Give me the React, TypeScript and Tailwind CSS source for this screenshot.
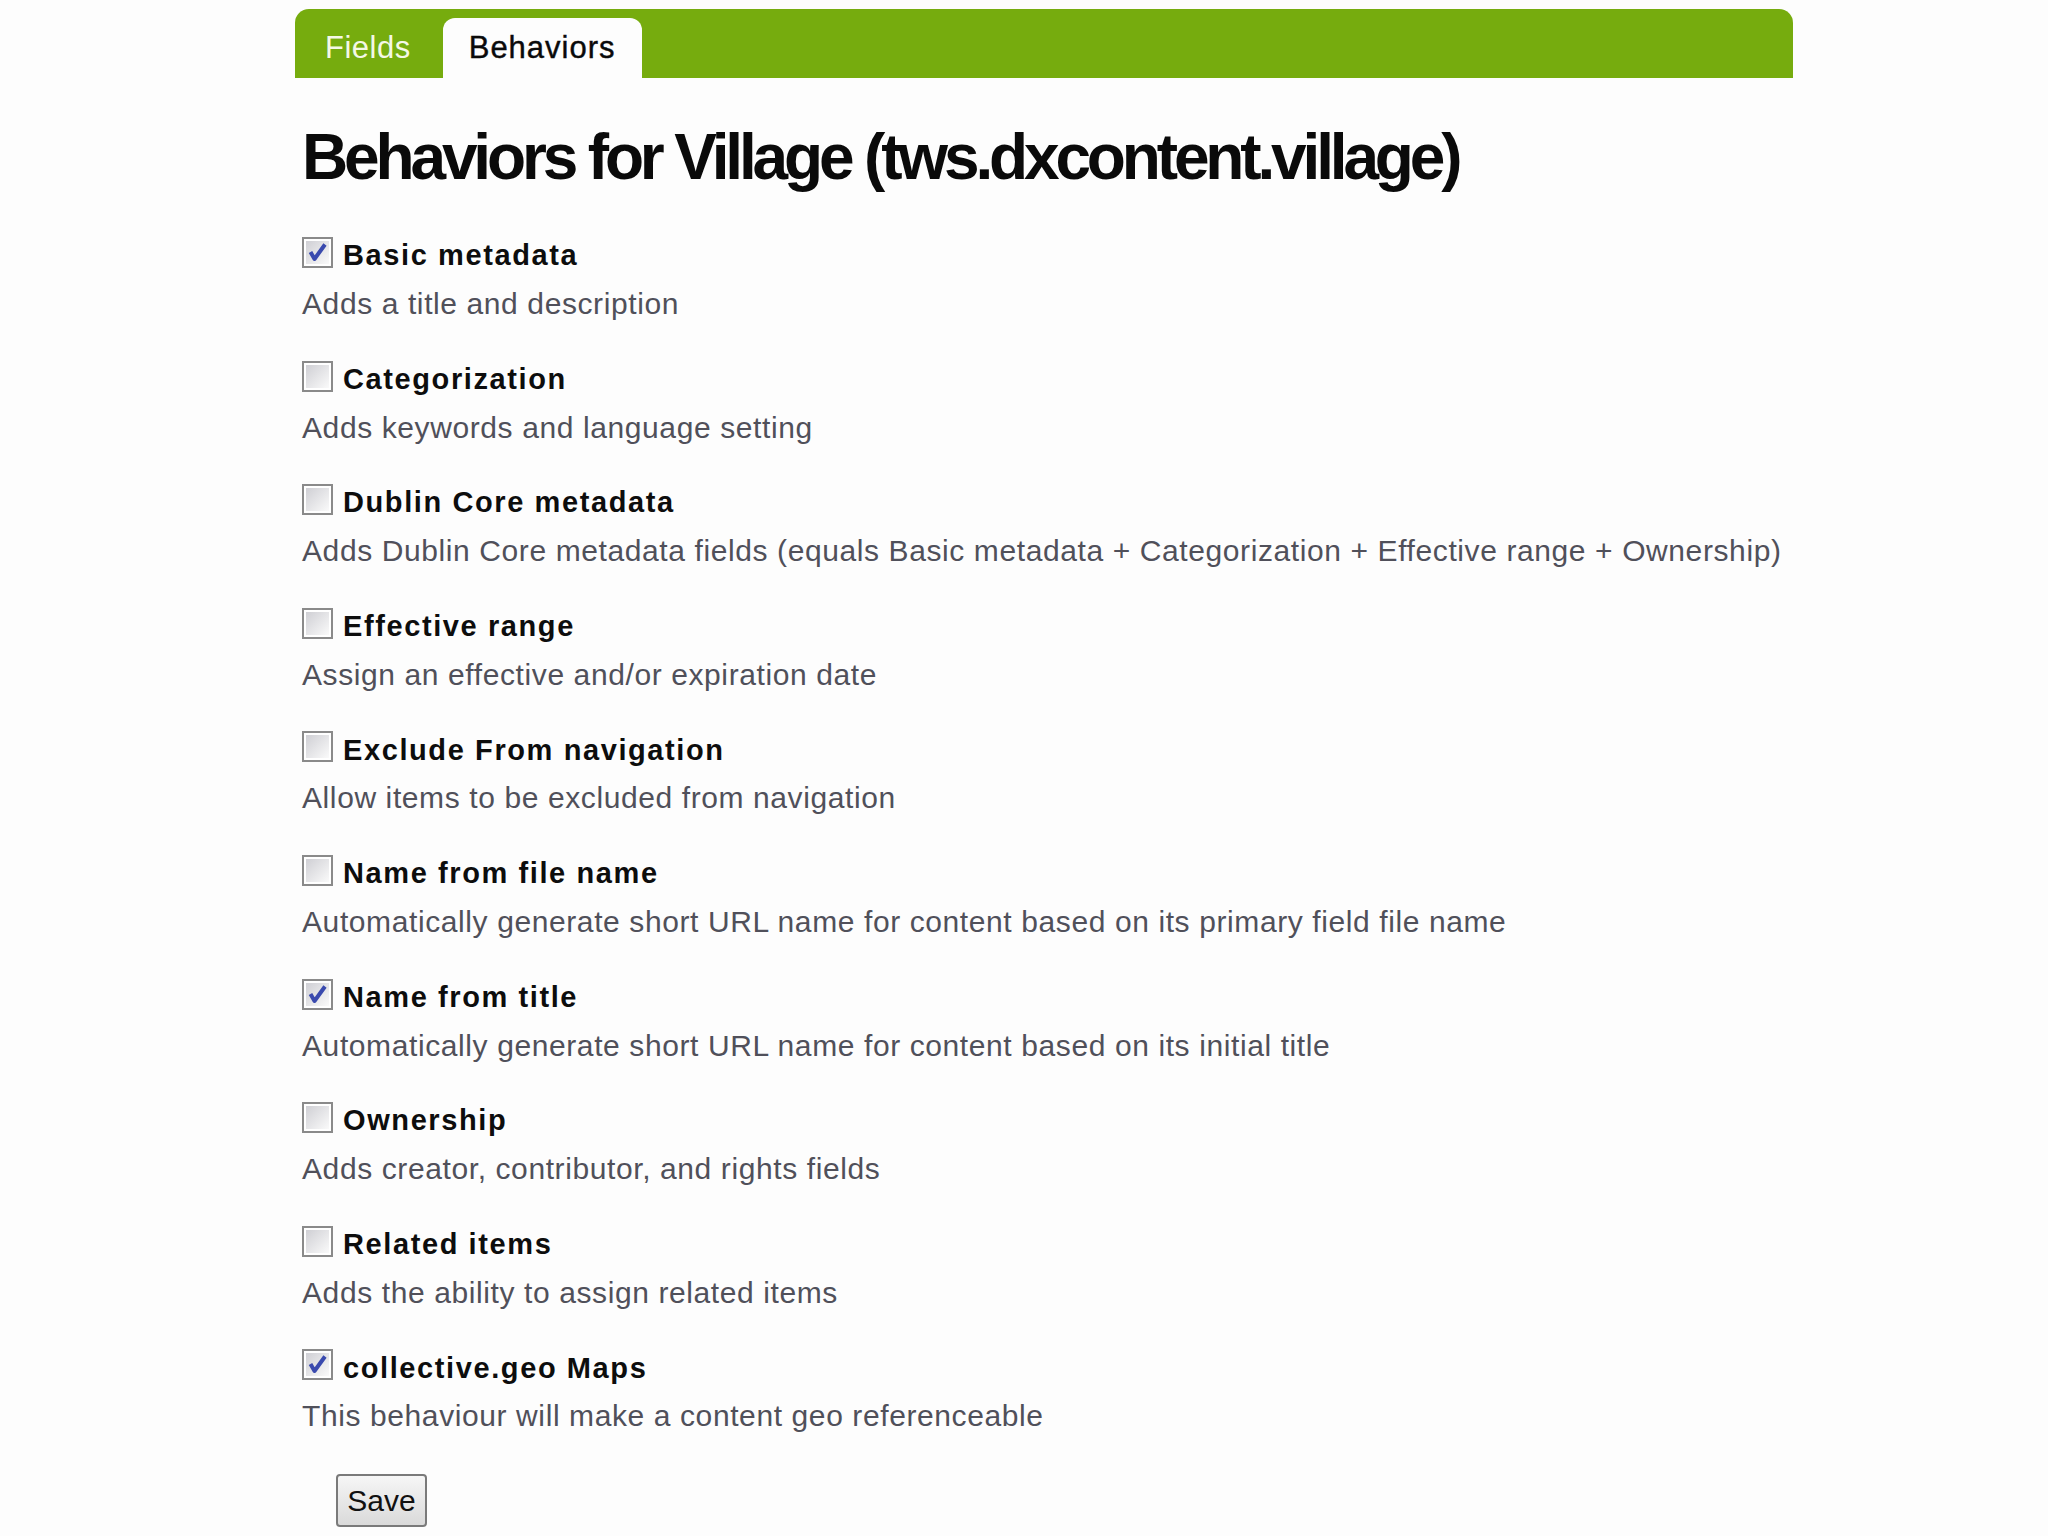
import React from "react";

type Behavior = {
  title: string;
  description: string;
  checked: boolean;
};

const behaviors: Behavior[] = [
  { title: "Basic metadata", description: "Adds a title and description", checked: true },
  { title: "Categorization", description: "Adds keywords and language setting", checked: false },
  {
    title: "Dublin Core metadata",
    description:
      "Adds Dublin Core metadata fields (equals Basic metadata + Categorization + Effective range + Ownership)",
    checked: false,
  },
  { title: "Effective range", description: "Assign an effective and/or expiration date", checked: false },
  { title: "Exclude From navigation", description: "Allow items to be excluded from navigation", checked: false },
  {
    title: "Name from file name",
    description: "Automatically generate short URL name for content based on its primary field file name",
    checked: false,
  },
  {
    title: "Name from title",
    description: "Automatically generate short URL name for content based on its initial title",
    checked: true,
  },
  { title: "Ownership", description: "Adds creator, contributor, and rights fields", checked: false },
  { title: "Related items", description: "Adds the ability to assign related items", checked: false },
  { title: "collective.geo Maps", description: "This behaviour will make a content geo referenceable", checked: true },
];

function CheckBox({ checked }: { checked: boolean }) {
  return (
    <svg width="31" height="31" viewBox="0 0 31 31" className="shrink-0 mb-[7px]">
      <defs>
        <linearGradient id="cb-fill" x1="0" y1="0" x2="1" y2="1">
          <stop offset="0" stopColor="#cfcfd4" />
          <stop offset="1" stopColor="#fafafa" />
        </linearGradient>
      </defs>
      <rect x="1" y="1" width="29" height="29" fill="#ffffff" stroke="#8a8a8a" strokeWidth="2" />
      <rect x="4" y="4" width="23" height="23" fill="url(#cb-fill)" />
      {checked && (
        <path
          d="M8.5 15 L12.5 22 L23 7.5"
          stroke="#3a4aae"
          strokeWidth="4"
          strokeLinejoin="round"
          fill="none"
        />
      )}
    </svg>
  );
}

export default function App() {
  return (
    <div className="min-h-screen bg-[#fdfdfd] pt-[9px] font-['Liberation_Sans',Arial,sans-serif]">
      <div className="ml-[295px] w-[1498px]">
        {/* tab bar */}
        <div className="flex h-[69px] items-end rounded-t-[14px] bg-[#76ac0e]">
          <div className="flex h-[60px] items-center pl-[30px] pr-[32px] text-[31px] tracking-[0.5px] text-[#f4f8e6]">
            Fields
          </div>
          <div className="flex h-[60px] items-center rounded-t-[12px] bg-[#fdfdfd] px-[26px] text-[31px] tracking-[1px] text-[#0a0a0a] [-webkit-text-stroke:0.4px_#0a0a0a]">
            Behaviors
          </div>
        </div>

        <div className="pl-[7px]">
          <h1 className="mt-[46px] text-[64px] font-bold leading-[66px] tracking-[-4.15px] text-[#0a0a0a]">
            Behaviors for Village (tws.dxcontent.village)
          </h1>

          <div className="mt-[48px]">
            {behaviors.map((b) => (
              <div key={b.title} className="mb-[39.6px]">
                <div className="flex h-[36px] items-center gap-[10px]">
                  <CheckBox checked={b.checked} />
                  <span className="text-[29px] font-bold tracking-[1.6px] text-[#0d0d0d]">{b.title}</span>
                </div>
                <div className="mt-[12px] h-[36px] text-[30px] leading-[36px] tracking-[0.6px] text-[#50505a]">
                  {b.description}
                </div>
              </div>
            ))}
          </div>

          <button className="ml-[34px] h-[53px] w-[91px] rounded-[4px] border-2 border-[#7a7a7a] bg-gradient-to-b from-[#f6f6f6] to-[#dadada] text-[30px] text-[#111111]">
            Save
          </button>
        </div>
      </div>
    </div>
  );
}
